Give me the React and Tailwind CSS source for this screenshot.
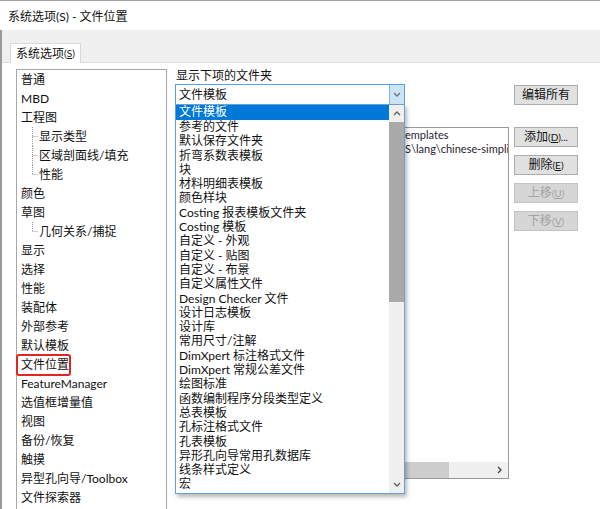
import React from "react";

const tree = [
  { t: "普通" },
  { t: "MBD" },
  { t: "工程图" },
  { t: "显示类型", c: "mid" },
  { t: "区域剖面线/填充", c: "mid" },
  { t: "性能", c: "last" },
  { t: "颜色" },
  { t: "草图" },
  { t: "几何关系/捕捉", c: "last" },
  { t: "显示" },
  { t: "选择" },
  { t: "性能" },
  { t: "装配体" },
  { t: "外部参考" },
  { t: "默认模板" },
  { t: "文件位置", hl: true },
  { t: "FeatureManager" },
  { t: "选值框增量值" },
  { t: "视图" },
  { t: "备份/恢复" },
  { t: "触摸" },
  { t: "异型孔向导/Toolbox" },
  { t: "文件探索器" },
];

const options = [
  "文件模板",
  "参考的文件",
  "默认保存文件夹",
  "折弯系数表模板",
  "块",
  "材料明细表模板",
  "颜色样块",
  "Costing 报表模板文件夹",
  "Costing 模板",
  "自定义 - 外观",
  "自定义 - 贴图",
  "自定义 - 布景",
  "自定义属性文件",
  "Design Checker 文件",
  "设计日志模板",
  "设计库",
  "常用尺寸/注解",
  "DimXpert 标注格式文件",
  "DimXpert 常规公差文件",
  "绘图标准",
  "函数编制程序分段类型定义",
  "总表模板",
  "孔标注格式文件",
  "孔表模板",
  "异形孔向导常用孔数据库",
  "线条样式定义",
  "宏",
];

function TreeLine({ last }) {
  return (
    <svg width="18" height="19" className="shrink-0">
      <line x1="11.5" y1="0" x2="11.5" y2={last ? 9.5 : 19} stroke="#9a9a9a" strokeDasharray="1 1" />
      <line x1="11.5" y1="9.5" x2="17" y2="9.5" stroke="#9a9a9a" strokeDasharray="1 1" />
    </svg>
  );
}

function Chevron({ dir, color = "#606060" }) {
  const d =
    dir === "up"
      ? "M1 5 L4 2 L7 5"
      : dir === "down"
      ? "M1 2 L4 5 L7 2"
      : "M2 1 L5 4 L2 7";
  return (
    <svg width="8" height="8" viewBox="0 0 8 8">
      <path d={d} fill="none" stroke={color} strokeWidth="1.3" />
    </svg>
  );
}

function Btn({ label, mn, suffix = "", disabled, className = "" }) {
  return (
    <div
      className={
        "flex h-[20px] w-[64px] items-center justify-center border text-[12px] leading-none " +
        (disabled
          ? "border-[#c4c4c4] bg-[#d6d6d6] text-[#a3a3a3] "
          : "border-[#adadad] bg-[#e1e1e1] text-[#111] ") +
        className
      }
    >
      <span>{label}</span>
      {mn && (
        <span className="text-[10px]">
          (<span className="underline">{mn}</span>){suffix}
        </span>
      )}
    </div>
  );
}

export default function App() {
  return (
    <div className="flex h-[509px] w-[600px] flex-col overflow-hidden border-t border-[#a0a0a0] bg-white font-['Lato','Noto_Sans_CJK_SC',sans-serif] text-[12px] text-[#111]">
      {/* Title bar */}
      <div className="flex h-[29px] shrink-0 items-center pl-[8px] pt-[2px] text-[12px]">
        系统选项(S) - 文件位置
      </div>

      {/* Body */}
      <div className="flex min-h-0 flex-1 flex-col border-l-2 border-[#9a9a9a] bg-[#f0f0f0]">
        {/* tab strip */}
        <div className="flex h-[32px] shrink-0 items-end pl-[8px]">
          <div className="relative -mb-px flex h-[20px] items-center border border-b-0 border-[#d9d9d9] bg-white px-[5px] text-[12px]">
            系统选项
            <span className="text-[10px]">
              (<span className="underline">S</span>)
            </span>
          </div>
        </div>

        {/* Panel */}
        <div className="flex min-h-0 flex-1 border-t border-[#dcdcdc] bg-white">
          {/* Tree */}
          <div className="ml-[14px] mt-[6px] h-[460px] w-[151px] shrink-0 border border-[#a8a8a8] pl-[4px]">
            {tree.map((it, i) => (
              <div key={i} className="flex h-[19px] items-center whitespace-nowrap leading-[19px]">
                {it.c && <TreeLine last={it.c === "last"} />}
                {it.hl ? (
                  <span className="relative inline-block h-[19px] leading-[19px]">
                    {it.t}
                    <span className="absolute -bottom-[2px] -left-[5px] -right-[2px] -top-[1px] rounded-[3px] border-2 border-[#e0261e]" />
                  </span>
                ) : (
                  <span>{it.t}</span>
                )}
              </div>
            ))}
          </div>

          {/* Middle column */}
          <div className="ml-[8px] flex w-[334px] shrink-0 flex-col pt-[4px]">
            <div className="h-[17px] pl-[1px] leading-[17px]">显示下项的文件夹</div>
            <div className="relative h-[21px] w-[230px]">
              <div className="flex h-full w-full border border-[#5b9fe0] bg-white">
                <div className="flex-1 pl-[3px] leading-[19px]">文件模板</div>
                <div className="flex w-[15px] items-center justify-center border-l border-[#7eb4ea] bg-[#cce4f7]">
                  <Chevron dir="down" color="#707070" />
                </div>
              </div>

              {/* Dropdown */}
              <div className="absolute left-0 top-full z-10 -mt-px flex h-[390px] w-[230px] border border-[#6a9fd6] bg-white shadow-[2px_3px_4px_rgba(0,0,0,0.28)]">
                <div className="flex-1">
                  {options.map((o, i) => (
                    <div
                      key={i}
                      className={
                        "h-[14.3px] whitespace-nowrap pl-[3px] leading-[14.3px] " +
                        (i === 0 ? "h-[15px] bg-[#0078d7] text-white" : "")
                      }
                    >
                      {o}
                    </div>
                  ))}
                </div>
                <div className="flex w-[15px] flex-col bg-[#f0f0f0]">
                  <div className="flex h-[17px] items-center justify-center">
                    <Chevron dir="up" />
                  </div>
                  <div className="h-[180px] bg-[#a9a9a9]" />
                  <div className="flex-1" />
                  <div className="flex h-[17px] items-center justify-center">
                    <Chevron dir="down" />
                  </div>
                </div>
              </div>
            </div>

            {/* Path list */}
            <div className="mt-[22px] flex h-[352px] flex-col border border-[#999] bg-white">
              <div className="flex-1 overflow-hidden text-[11px] text-[#2a2233]">
                <div className="flex h-[14px] items-center whitespace-nowrap leading-[14px]">
                  <span className="w-[229px] shrink-0 overflow-hidden text-right">C:\ProgramData\SOLIDWORKS\SOLIDWORKS 2018\t</span>
                  <span>emplates</span>
                </div>
                <div className="flex h-[14px] items-center whitespace-nowrap leading-[14px]">
                  <span className="w-[229px] shrink-0 overflow-hidden text-right">C:\Program Files\SOLIDWORKS Corp\SOLIDWORK</span>
                  <span>S\lang\chinese-simplified\Tutorial</span>
                </div>
              </div>
              <div className="flex h-[16px] shrink-0 bg-[#f0f0f0]">
                <div className="w-[17px]" />
                <div className="w-[256px] bg-[#cdcdcd]" />
                <div className="flex-1" />
                <div className="flex w-[17px] items-center justify-center">
                  <Chevron dir="right" color="#404040" />
                </div>
              </div>
            </div>
          </div>

          {/* Buttons */}
          <div className="ml-[5px] flex flex-col pt-[22px]">
            <Btn label="编辑所有" />
            <Btn label="添加" mn="D" suffix="..." className="mt-[22px]" />
            <Btn label="删除" mn="E" className="mt-[8px]" />
            <Btn label="上移" mn="U" disabled className="mt-[8px]" />
            <Btn label="下移" mn="V" disabled className="mt-[8px]" />
          </div>
        </div>
      </div>
    </div>
  );
}
